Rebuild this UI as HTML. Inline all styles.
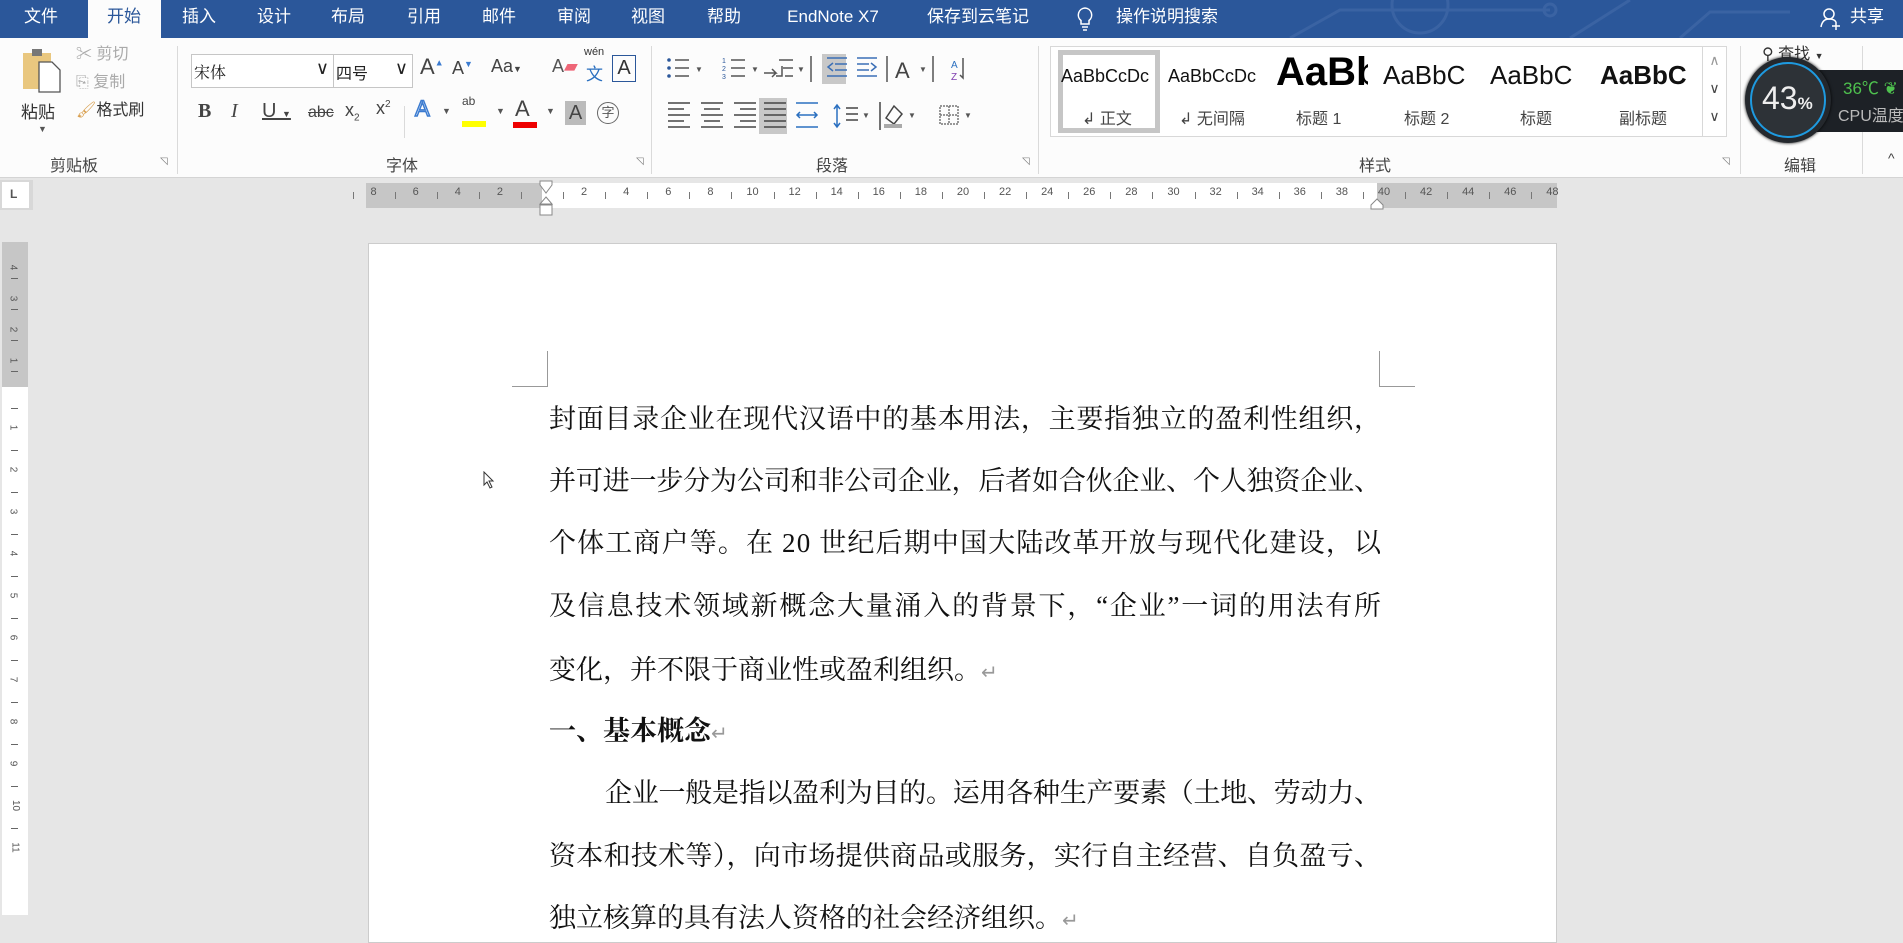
<!DOCTYPE html>
<html><head><meta charset="utf-8"><style>
*{margin:0;padding:0;box-sizing:border-box}
body{width:1903px;height:915px;overflow:hidden;background:#e6e6e6;font-family:"Liberation Sans","Noto Sans CJK SC",sans-serif;position:relative}
.a{position:absolute;white-space:nowrap}
#tabs{position:absolute;left:0;top:0;width:1903px;height:38px;background:#2b579a}
.t{position:absolute;top:0;height:38px;line-height:34px;color:#fff;font-size:17px;transform:translateX(-50%)}
#rib{position:absolute;left:0;top:38px;width:1903px;height:140px;background:#fcfcfc;border-bottom:1px solid #d4d4d4}
.sep{position:absolute;top:8px;width:1px;height:128px;background:#dadada}
.gl{position:absolute;top:114px;font-size:16px;color:#444;transform:translateX(-50%)}
.r{font-size:16px;color:#444}
.doc{position:absolute;left:549px;font-family:"Liberation Serif","Noto Serif CJK SC",serif;font-size:27px;color:#111;line-height:34px;white-space:nowrap}
.ret{color:#999;font-family:"DejaVu Sans",sans-serif;font-size:20px;font-weight:normal}
.rn{position:absolute;top:3px;font-size:11px;color:#555;transform:translateX(-50%)}
</style></head><body>
<div id="tabs">
<svg class="a" style="left:1250px;top:0" width="550" height="38"><g fill="none" stroke="#3a63a3" stroke-width="3"><circle cx="170" cy="5" r="28"/><path d="M40 38 L90 10 L300 10 M320 38 L380 0 M430 38 L460 12 L540 12"/><circle cx="300" cy="10" r="6"/></g></svg>
<div class="a" style="left:88px;top:0;width:73px;height:38px;background:#fcfcfc"></div>
<span class="t" style="left:41px">文件</span>
<span class="t" style="left:124px;color:#2b579a">开始</span>
<span class="t" style="left:199px">插入</span>
<span class="t" style="left:274px">设计</span>
<span class="t" style="left:348px">布局</span>
<span class="t" style="left:424px">引用</span>
<span class="t" style="left:499px">邮件</span>
<span class="t" style="left:574px">审阅</span>
<span class="t" style="left:648px">视图</span>
<span class="t" style="left:724px">帮助</span>
<span class="t" style="left:833px">EndNote X7</span>
<span class="t" style="left:978px">保存到云笔记</span>
<svg class="a" style="left:1076px;top:6px" width="18" height="26"><path d="M9 2a7 7 0 0 0-4 12.5V18h8v-3.5A7 7 0 0 0 9 2z M6 21h6 M7 24h4" fill="none" stroke="#fff" stroke-width="1.5"/></svg>
<span class="t" style="left:1167px">操作说明搜索</span>
<svg class="a" style="left:1820px;top:7px" width="22" height="24"><circle cx="9" cy="7" r="5" fill="none" stroke="#fff" stroke-width="1.5"/><path d="M1 20c1-6 4-8 8-8s6 1 7 3 M16 15v8 M12 19h8" fill="none" stroke="#fff" stroke-width="1.5"/></svg>
<span class="t" style="left:1867px">共享</span>
</div>
<div id="rib">
<svg class="a" style="left:22px;top:10px" width="44" height="46"><rect x="1" y="5" width="28" height="36" fill="#e9c77f"/><rect x="10" y="1" width="10" height="7" fill="#777"/><path d="M17 14h13l8 8v22H17z" fill="#fff" stroke="#555" stroke-width="1.3"/></svg>
<span class="a r" style="left:21px;top:60px;font-size:17px;color:#333">粘贴</span>
<span class="a" style="left:38px;top:86px;font-size:9px;color:#555">▼</span>
<span class="a" style="left:76px;top:2px;font-size:16px;color:#aaa">✂ 剪切</span>
<span class="a" style="left:76px;top:30px;font-size:16px;color:#aaa">⎘ 复制</span>
<span class="a" style="left:76px;top:58px;font-size:16px;color:#333"><span style="color:#d9a050">🖌</span>格式刷</span>
<span class="gl" style="left:74px">剪贴板</span>
<span class="a" style="left:160px;top:118px;font-size:10px;color:#777">◹</span>
<div class="sep" style="left:177px"></div>
<div class="a" style="left:191px;top:16px;width:143px;height:34px;border:1px solid #c6c6c6;background:#fff;font-family:'Noto Serif CJK SC',serif;font-size:16px;padding:5px 2px;color:#222">宋体<span style="position:absolute;right:4px;top:3px;font-size:18px;font-family:'DejaVu Sans'">∨</span></div>
<div class="a" style="left:333px;top:16px;width:80px;height:34px;border:1px solid #c6c6c6;background:#fff;font-size:16px;padding:5px 2px;color:#222">四号<span style="position:absolute;right:4px;top:3px;font-size:18px;font-family:'DejaVu Sans'">∨</span></div>
<span class="a" style="left:420px;top:16px;font-size:22px;color:#444">A<sup style="font-size:9px;color:#3b7bd0">▲</sup></span>
<span class="a" style="left:452px;top:20px;font-size:18px;color:#444">A<sup style="font-size:9px;color:#3b7bd0">▼</sup></span>
<span class="a" style="left:491px;top:18px;font-size:18px;color:#444">Aa<span style="font-size:9px">▼</span></span>
<span class="a" style="left:552px;top:18px;font-size:18px;color:#555">A<span style="color:#e67">▰</span></span>
<span class="a" style="left:584px;top:8px;font-size:11px;color:#333">wén</span>
<span class="a" style="left:586px;top:22px;font-size:17px;color:#2b70c0">文</span>
<div class="a" style="left:612px;top:17px;width:24px;height:27px;border:1.5px solid #2b579a;font-size:20px;text-align:center;line-height:24px;color:#333">A</div>
<div class="a r" style="left:198px;top:62px;font-size:20px;color:#444;font-weight:bold;font-family:'Liberation Serif'">B</div>
<div class="a r" style="left:231px;top:62px;font-size:20px;color:#444;font-style:italic;font-family:'Liberation Serif'">I</div>
<div class="a r" style="left:262px;top:62px;font-size:20px;color:#444;text-decoration:underline">U <span style="font-size:9px">▼</span></div>
<div class="a r" style="left:308px;top:66px;font-size:16px;color:#444;text-decoration:line-through">abc</div>
<div class="a r" style="left:345px;top:62px;font-size:18px;color:#444">x<sub style="font-size:10px">2</sub></div>
<div class="a r" style="left:376px;top:60px;font-size:18px;color:#444">x<sup style="font-size:10px">2</sup></div>
<div class="sep" style="left:404px;top:68px;height:32px"></div>
<div class="a" style="left:415px;top:58px;font-size:22px;color:#fff;-webkit-text-stroke:1.5px #3b7bd0">A</div><span class="a" style="left:442px;top:68px;font-size:9px;color:#555">▼</span>
<div class="a" style="left:462px;top:56px;font-size:12px;color:#444">ab</div><div class="a" style="left:462px;top:83px;width:24px;height:6px;background:#ff0"></div><span class="a" style="left:496px;top:68px;font-size:9px;color:#555">▼</span>
<div class="a" style="left:515px;top:58px;font-size:22px;color:#444">A</div><div class="a" style="left:513px;top:84px;width:24px;height:6px;background:#e00"></div><span class="a" style="left:546px;top:68px;font-size:9px;color:#555">▼</span>
<div class="a" style="left:565px;top:63px;width:21px;height:24px;background:#bbb;font-size:20px;color:#444;text-align:center;line-height:24px">A</div>
<div class="a" style="left:597px;top:64px;width:22px;height:22px;border:1.5px solid #666;border-radius:50%;font-size:13px;text-align:center;line-height:19px;color:#555">字</div>
<span class="gl" style="left:402px">字体</span>
<span class="a" style="left:636px;top:118px;font-size:10px;color:#777">◹</span>
<div class="sep" style="left:651px"></div>
<div class="a" style="left:822px;top:16px;width:24px;height:30px;background:#c8c8c8"></div>
<div class="a" style="left:759px;top:60px;width:28px;height:36px;background:#c8c8c8"></div>
<svg class="a" style="left:665px;top:18px" width="380" height="30" fill="none" stroke="#555" stroke-width="1.5">
<g><circle cx="4" cy="4" r="1.8" fill="#2b579a" stroke="none"/><circle cx="4" cy="12" r="1.8" fill="#2b579a" stroke="none"/><circle cx="4" cy="20" r="1.8" fill="#2b579a" stroke="none"/><path d="M10 4h14M10 12h14M10 20h14"/><text x="30" y="16" font-size="8" fill="#555" stroke="none">▼</text></g>
<g transform="translate(56,0)"><path d="M10 4h14M10 12h14M10 20h14"/><text x="1" y="7" font-size="7" fill="#2b579a" stroke="none">1</text><text x="1" y="15" font-size="7" fill="#2b579a" stroke="none">2</text><text x="1" y="23" font-size="7" fill="#2b579a" stroke="none">3</text><text x="30" y="16" font-size="8" fill="#555" stroke="none">▼</text></g>
<g transform="translate(106,0)"><path d="M8 4h14M12 12h10M14 20h8"/><text x="26" y="16" font-size="8" fill="#555" stroke="none">▼</text></g>
<path d="M146 0v26"/>
<g transform="translate(160,0)"><path d="M2 2h20M10 8h12M10 14h12M2 20h20M8 7l-5 4 5 4" stroke="#3b6fb6"/></g>
<g transform="translate(190,0)"><path d="M2 2h20M2 8h12M2 14h12M2 20h20M16 7l5 4-5 4" stroke="#3b6fb6"/></g>
<path d="M222 0v26"/>
<text x="230" y="22" font-size="22" fill="#444" stroke="none">A</text><text x="254" y="16" font-size="8" fill="#555" stroke="none">▼</text>
<path d="M268 0v26"/>
<text x="286" y="12" font-size="10" fill="#2b70c0" stroke="none">A</text><text x="286" y="24" font-size="10" fill="#8040b0" stroke="none">Z</text><path d="M298 2v20l-3-3"/>
</svg>
<svg class="a" style="left:760px;top:25px" width="30" height="20" fill="none" stroke="#555" stroke-width="1.5"><path d="M4 10h12l-4-4M16 10l-4 4M22 3v10h-6"/></svg>
<svg class="a" style="left:668px;top:64px" width="310" height="30" fill="none" stroke="#444" stroke-width="1.5">
<path d="M0 1h22M0 7h16M0 13h22M0 19h16M0 25h22"/><path d="M33 1h22M36 7h16M33 13h22M36 19h16M33 25h22"/><path d="M66 1h22M72 7h16M66 13h22M72 19h16M66 25h22"/>
<path d="M96 1h22M96 7h22M96 13h22M96 19h22M96 25h22"/>
<path d="M128 1h22M128 25h22M130 13h18M132 10l-3 3 3 3M146 10l3 3-3 3" stroke="#2b70c0"/>
<path d="M169 4v20M166 7l3-4 3 4M166 21l3 4 3-4" stroke="#2b70c0"/><path d="M178 6h12M178 12h12M178 18h12"/><text x="194" y="16" font-size="8" fill="#555" stroke="none">▼</text>
<path d="M212 0v28"/><path d="M218 16l8-12 8 8-8 10z"/><path d="M216 24h18" stroke="#aaa" stroke-width="4"/><text x="240" y="16" font-size="8" fill="#555" stroke="none">▼</text>
<g stroke="#777" stroke-dasharray="2 1"><rect x="272" y="4" width="18" height="18"/><path d="M281 4v18M272 13h18"/></g><text x="296" y="16" font-size="8" fill="#555" stroke="none">▼</text>
</svg>
<span class="gl" style="left:832px">段落</span>
<span class="a" style="left:1022px;top:118px;font-size:10px;color:#777">◹</span>
<div class="sep" style="left:1038px"></div>
<div class="a" style="left:1050px;top:8px;width:677px;height:91px;border:1px solid #d8d8d8;background:#fff"></div>
<div class="a" style="left:1058px;top:12px;width:102px;height:83px;border:5px solid #c6c6c6"></div>
<div class="a" style="left:1061px;top:28px;width:96px;overflow:hidden;font-size:18px;color:#111">AaBbCcDc</div>
<div class="a" style="left:1168px;top:28px;width:90px;overflow:hidden;font-size:18px;color:#111">AaBbCcDc</div>
<div class="a" style="left:1276px;top:12px;width:92px;overflow:hidden;font-size:40px;font-weight:bold;color:#000">AaBb</div>
<div class="a" style="left:1383px;top:22px;font-size:26px;color:#111">AaBbC</div>
<div class="a" style="left:1490px;top:22px;font-size:26px;color:#111">AaBbC</div>
<div class="a" style="left:1600px;top:22px;font-size:26px;font-weight:bold;color:#111">AaBbC</div>
<div class="a r" style="left:1082px;top:67px">↲ 正文</div>
<div class="a r" style="left:1179px;top:67px">↲ 无间隔</div>
<div class="a r" style="left:1296px;top:67px">标题 1</div>
<div class="a r" style="left:1404px;top:67px">标题 2</div>
<div class="a r" style="left:1520px;top:67px">标题</div>
<div class="a r" style="left:1619px;top:67px">副标题</div>
<div class="a" style="left:1702px;top:9px;width:24px;height:90px;border-left:1px solid #d8d8d8;font-size:14px;color:#999;text-align:center;line-height:28px;font-family:'DejaVu Sans'">∧<br><span style="color:#444">∨</span><br><span style="color:#444">∨</span></div>
<span class="gl" style="left:1375px">样式</span>
<span class="a" style="left:1722px;top:118px;font-size:10px;color:#777">◹</span>
<div class="sep" style="left:1740px"></div>
<span class="a r" style="left:1762px;top:2px;color:#333">⚲ 查找 <span style="font-size:9px">▼</span></span>
<span class="gl" style="left:1800px">编辑</span>
<div class="sep" style="left:1862px"></div>
<span class="a" style="left:1888px;top:112px;font-size:14px;color:#444">^</span>
<div class="a" style="left:1808px;top:32px;width:100px;height:62px;background:#1d2126;border-radius:4px"></div>
<span class="a" style="left:1843px;top:36px;font-size:17px;color:#4ec04e">36℃ ❦</span>
<span class="a" style="left:1838px;top:64px;font-size:16px;color:#bbb">CPU温度</span>
<div class="a" style="left:1745px;top:19px;width:86px;height:86px;border-radius:50%;background:#24282d;box-shadow:0 0 3px #000"></div>
<div class="a" style="left:1750px;top:24px;width:76px;height:76px;border-radius:50%;border:2.5px solid #1e9ae0;background:#2d3237"></div>
<span class="a" style="left:1762px;top:42px;font-size:32px;color:#eee">43<span style="font-size:17px;font-weight:bold">%</span></span>
</div>
<div class="a" style="left:0;top:180px;width:33px;height:30px;background:#d8d8d8"></div>
<div class="a" style="left:2px;top:182px;width:27px;height:26px;background:#fff;font-size:12px;font-weight:bold;color:#555;padding:5px 0 0 8px">L</div>
<div id="hr" class="a" style="left:366px;top:183px;width:1191px;height:25px;background:#fff">
<div class="a" style="left:0;top:0;width:176px;height:25px;background:#c6c6c6"></div>
<div class="a" style="left:1011px;top:0;width:180px;height:25px;background:#c6c6c6"></div>
</div>
<svg class="a" style="left:538px;top:180px" width="16" height="38" fill="#fff" stroke="#888"><path d="M2 1h12v4l-6 8-6-8z M8 17l6 7H2z M2 25h12v10H2z"/></svg>
<svg class="a" style="left:1370px;top:198px" width="14" height="12" fill="#fff" stroke="#888"><path d="M7 1l6 6v4H1V7z"/></svg>
<div id="vr" class="a" style="left:2px;top:242px;width:26px;height:673px;background:#fff">
<div class="a" style="left:0;top:0;width:26px;height:145px;background:#c6c6c6"></div>
</div>
<div class="a" style="left:368px;top:243px;width:1189px;height:700px;background:#fff;border:1px solid #ccc"></div>
<div class="a" style="left:512px;top:351px;width:36px;height:36px;border-right:1px solid #999;border-bottom:1px solid #999"></div>
<div class="a" style="left:1379px;top:351px;width:36px;height:36px;border-left:1px solid #999;border-bottom:1px solid #999"></div>
<svg class="a" style="left:483px;top:471px" width="12" height="18"><path d="M1 1v13l3-3 3 6 2-1-3-6h4z" fill="#fff" stroke="#333"/></svg>
<div class="doc j" data-w="832" style="top:402px">封面目录企业在现代汉语中的基本用法，主要指独立的盈利性组织，</div>
<div class="doc j" data-w="832" style="top:464px">并可进一步分为公司和非公司企业，后者如合伙企业、个人独资企业、</div>
<div class="doc j" data-w="832" style="top:526px">个体工商户等。在 20 世纪后期中国大陆改革开放与现代化建设，以</div>
<div class="doc j" data-w="832" style="top:589px">及信息技术领域新概念大量涌入的背景下，“企业”一词的用法有所</div>
<div class="doc" style="top:653px">变化，并不限于商业性或盈利组织。<span class="ret">↵</span></div>
<div class="doc" style="top:714px;font-weight:bold">一、基本概念<span class="ret">↵</span></div>
<div class="doc j" data-w="776" style="top:776px;left:605px">企业一般是指以盈利为目的。运用各种生产要素（土地、劳动力、</div>
<div class="doc j" data-w="832" style="top:839px">资本和技术等），向市场提供商品或服务，实行自主经营、自负盈亏、</div>
<div class="doc" style="top:901px">独立核算的具有法人资格的社会经济组织。<span class="ret">↵</span></div>
<script>
document.querySelectorAll('.j').forEach(function(el){
 var target=+el.getAttribute('data-w');var n=el.textContent.length;
 var w=el.getBoundingClientRect().width;
 var ls=(target-w)/Math.max(1,n-1);
 el.style.letterSpacing=ls+'px';
 var w2=el.getBoundingClientRect().width;
 if(Math.abs(w2-target)>2){el.style.letterSpacing=(ls+(target-w2)/n)+'px';}
});
var hr=document.getElementById('hr'),h='';
for(var i=-8;i<=48;i+=2){var x=176+i*21.05;if(i!==0)h+='<span class="rn" style="left:'+x+'px">'+Math.abs(i)+'</span>';}
for(var i=-9;i<=48;i++){if(i%2){var x=176+i*21.05;h+='<div class="a" style="left:'+x+'px;top:9px;width:1px;height:7px;background:#777"></div>';}}
hr.innerHTML+=h;
var vr=document.getElementById('vr'),v='';
var labs=[4,3,2,1];
for(var k=0;k<4;k++){v+='<span class="a" style="left:8px;top:'+(20+k*31)+'px;font-size:10px;color:#555;transform:rotate(90deg)">'+labs[k]+'</span><div class="a" style="left:9px;top:'+(36+k*31)+'px;width:7px;height:1px;background:#666"></div>';}
for(var k=1;k<=22;k++){var y=145+k*21;v+=(k%2==0)?'<span class="a" style="left:8px;top:'+(y-7)+'px;font-size:10px;color:#555;transform:rotate(90deg)">'+(k/2)+'</span>':'<div class="a" style="left:9px;top:'+y+'px;width:7px;height:1px;background:#666"></div>';}
vr.innerHTML+=v;
</script>
</body></html>
